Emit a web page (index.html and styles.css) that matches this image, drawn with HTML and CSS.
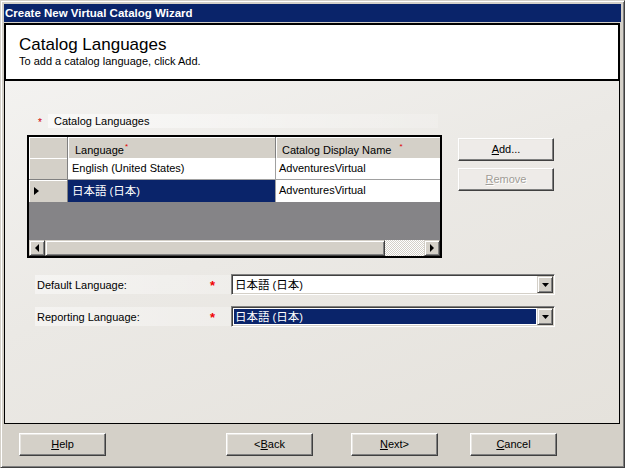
FILE: index.html
```html
<!DOCTYPE html>
<html>
<head>
<meta charset="utf-8">
<link rel="stylesheet" href="styles.css">
</head>
<body>
<div class="window">
  <div class="titlebar">Create New Virtual Catalog Wizard</div>
  <div class="header">
    <div class="h-title">Catalog Languages</div>
    <div class="h-sub">To add a catalog language, click Add.</div>
  </div>
  <div class="body">
    <div class="section-label"><span class="req-small">*</span><span class="band">Catalog Languages</span></div>
    <div class="grid-row">
      <div class="grid">
        <div class="g-row g-head">
          <div class="rh"></div>
          <div class="hc hc-lang">Language<span class="mark">*</span></div>
          <div class="hc hc-name">Catalog Display Name<span class="mark mark-far">*</span></div>
        </div>
        <div class="g-row">
          <div class="rh"></div>
          <div class="dc dc-lang">English (United States)</div>
          <div class="dc dc-name">AdventuresVirtual</div>
        </div>
        <div class="g-row">
          <div class="rh"><span class="cur"></span></div>
          <div class="dc dc-lang sel"><span class="ja">日本語</span> (<span class="ja">日本</span>)</div>
          <div class="dc dc-name">AdventuresVirtual</div>
        </div>
        <div class="g-empty"></div>
        <div class="hscroll">
          <div class="sbtn"><span class="tri-left"></span></div>
          <div class="thumb"></div>
          <div class="track"></div>
          <div class="sbtn"><span class="tri-right"></span></div>
        </div>
      </div>
      <div class="side-buttons">
        <div class="btn btn-side"><span><u>A</u>dd...</span></div>
        <div class="btn btn-side disabled"><span><u>R</u>emove</span></div>
      </div>
    </div>
    <div class="form">
      <div class="f-row">
        <div class="f-label"><span>Default Language:</span><span class="req">*</span></div>
        <div class="combo">
          <div class="c-val"><span class="ja">日本語</span> (<span class="ja">日本</span>)</div>
          <div class="c-btn"><svg width="7" height="4" viewBox="0 0 7 4"><path d="M0 0h7L3.5 4z" fill="#000"/></svg></div>
        </div>
      </div>
      <div class="f-row">
        <div class="f-label"><span>Reporting Language:</span><span class="req">*</span></div>
        <div class="combo">
          <div class="c-val c-sel"><span class="ja">日本語</span> (<span class="ja">日本</span>)</div>
          <div class="c-btn"><svg width="7" height="4" viewBox="0 0 7 4"><path d="M0 0h7L3.5 4z" fill="#000"/></svg></div>
        </div>
      </div>
    </div>
  </div>
  <div class="footer">
    <div class="btn btn-foot"><span><u>H</u>elp</span></div>
    <div class="btn btn-foot back"><span>&lt;<u>B</u>ack</span></div>
    <div class="btn btn-foot next"><span><u>N</u>ext&gt;</span></div>
    <div class="btn btn-foot cancel"><span><u>C</u>ancel</span></div>
  </div>
</div>
</body>
</html>
```

FILE: styles.css
```css
* { box-sizing: border-box; }

body {
  margin: 0;
  width: 625px;
  height: 468px;
  overflow: hidden;
  font-family: "Liberation Sans", "Noto Sans CJK JP", sans-serif;
  font-size: 11px;
  color: #000;
}

.ja { font-family: "Noto Sans CJK JP", sans-serif; font-size: 11.5px; }

.window {
  width: 625px;
  height: 468px;
  background: #d4d0c8;
  border: 1px solid;
  border-color: #d4d0c8 #404040 #404040 #d4d0c8;
  box-shadow: inset 1px 1px #fff, inset -1px -1px #808080;
  padding: 3px;
  display: flex;
  flex-direction: column;
}

.titlebar {
  height: 18px;
  flex: none;
  background: #0a246a;
  color: #fff;
  font-weight: bold;
  font-size: 11.5px;
  line-height: 18px;
  padding-left: 1px;
  margin-bottom: 1px;
}

.header {
  flex: none;
  height: 58px;
  width: 616px;
  border: 2px solid #000;
  background: #fff;
  padding: 10px 0 0 13px;
}

.h-title { font-size: 17px; line-height: 20px; }
.h-sub { font-size: 11px; line-height: 13px; }

.body {
  flex: none;
  width: 616px;
  height: 343px;
  border: 1px solid #000;
  border-top: none;
  background: linear-gradient(160deg, #f3f2f0 0%, #ebe9e5 45%, #e5e2dc 100%);
  padding: 33px 0 0 0;
}

.section-label {
  display: flex;
  align-items: center;
  height: 14px;
  margin-left: 33px;
}

.req-small {
  width: 10px;
  color: #d00000;
  font-size: 10px;
  line-height: 14px;
  padding-top: 3px;
}

.band {
  padding-left: 6px;
  width: 390px;
  line-height: 14px;
  background: linear-gradient(90deg, rgba(255,255,255,0.55), rgba(255,255,255,0.15));
}

.grid-row {
  display: flex;
  gap: 16px;
  margin: 7px 0 0 22px;
}

.grid {
  width: 415px;
  height: 123px;
  border: 2px solid #000;
  display: flex;
  flex-direction: column;
  background: #858487;
}

.g-row {
  display: grid;
  grid-template-columns: 39px 208px 164px;
  height: 22px;
  flex: none;
}

.g-head { height: 21px; }

.rh {
  background: #d4d0c8;
  border-right: 1px solid #808080;
  border-bottom: 1px solid #808080;
  box-shadow: inset 1px 1px #fff;
  display: flex;
  align-items: center;
  padding-left: 5px;
}

.cur {
  width: 0;
  height: 0;
  border-left: 5px solid #000;
  border-top: 4px solid transparent;
  border-bottom: 4px solid transparent;
}

.hc {
  background: #d4d0c8;
  border-right: 1px solid #808080;
  border-bottom: 1px solid #808080;
  box-shadow: inset 1px 1px #fff;
  line-height: 20px;
  white-space: nowrap;
}

.hc-lang { padding-left: 7px; }
.hc-name { padding-left: 6px; border-right: none; }

.mark {
  color: #e00000;
  font-size: 8px;
  vertical-align: 5px;
  margin-left: 1px;
}

.mark-far { margin-left: 8px; }

.dc {
  background: #fff;
  border-right: 1px solid #a0a0a0;
  border-bottom: 1px solid #a0a0a0;
  line-height: 21px;
  white-space: nowrap;
}

.dc-lang { padding-left: 4px; }
.dc-name { padding-left: 3px; border-right: none; }

.sel { background: #0a246a; color: #fff; }

.g-empty { flex: none; height: 38px; background: #858487; }

.hscroll {
  flex: none;
  height: 16px;
  display: flex;
}

.sbtn, .thumb {
  background: #d4d0c8;
  border: 1px solid;
  border-color: #d4d0c8 #404040 #404040 #d4d0c8;
  box-shadow: inset 1px 1px #fff, inset -1px -1px #808080;
}

.sbtn {
  width: 16px;
  display: flex;
  align-items: center;
  justify-content: center;
}

.thumb { width: 340px; }

.track {
  width: 39px;
  background: repeating-conic-gradient(#d4d0c8 0 25%, #fff 0 50%) 0 0 / 2px 2px;
}

.tri-left {
  width: 0; height: 0;
  border-right: 4px solid #000;
  border-top: 4px solid transparent;
  border-bottom: 4px solid transparent;
  margin-left: -1px;
}

.tri-right {
  width: 0; height: 0;
  border-left: 4px solid #000;
  border-top: 4px solid transparent;
  border-bottom: 4px solid transparent;
}

.side-buttons {
  display: flex;
  flex-direction: column;
  gap: 7px;
  margin-top: 3px;
}

.btn {
  height: 23px;
  display: flex;
  align-items: center;
  justify-content: center;
  border: 1px solid;
  border-color: #fff #404040 #404040 #fff;
  box-shadow: inset -1px -1px #808080, inset 1px 1px #e8e6e2;
  background: #d4d0c8;
  line-height: 13px;
}

.btn-side { width: 96px; background: #eeebe8; }

.disabled { color: #a09c96; }
.disabled span { text-shadow: 1px 1px #fff; }

.form {
  margin: 16px 0 0 30px;
  display: flex;
  flex-direction: column;
  gap: 11px;
}

.f-row {
  display: flex;
  height: 21px;
}

.f-label {
  width: 196px;
  display: flex;
  align-items: center;
  justify-content: space-between;
  padding: 0 16px 0 2px;
  background: linear-gradient(90deg, rgba(255,255,255,0.45), rgba(255,255,255,0.25));
  margin: 1px 0;
}

.req {
  color: #f00000;
  font-weight: bold;
  font-size: 13px;
  line-height: 13px;
  margin-top: 2px;
}

.combo {
  width: 324px;
  height: 21px;
  border: 1px solid;
  border-color: #808080 #fff #fff #808080;
  box-shadow: inset 1px 1px #404040, inset -1px -1px #d4d0c8;
  background: #fff;
  padding: 1px;
  display: flex;
}

.c-val {
  flex: 1;
  margin: 1px;
  padding-left: 1px;
  line-height: 15px;
  white-space: nowrap;
}

.c-sel { background: #0a246a; color: #fff; }

.c-btn {
  width: 16px;
  height: 17px;
  background: #d4d0c8;
  border: 1px solid;
  border-color: #d4d0c8 #404040 #404040 #d4d0c8;
  box-shadow: inset 1px 1px #fff, inset -1px -1px #808080;
  display: flex;
  align-items: center;
  justify-content: center;
}

.footer {
  flex: 1;
  display: flex;
  align-items: flex-start;
  padding: 9px 0 0 15px;
}

.btn-foot { width: 87px; }
.back { margin-left: 120px; }
.next { margin-left: 38px; }
.cancel { margin-left: 32px; }
```
